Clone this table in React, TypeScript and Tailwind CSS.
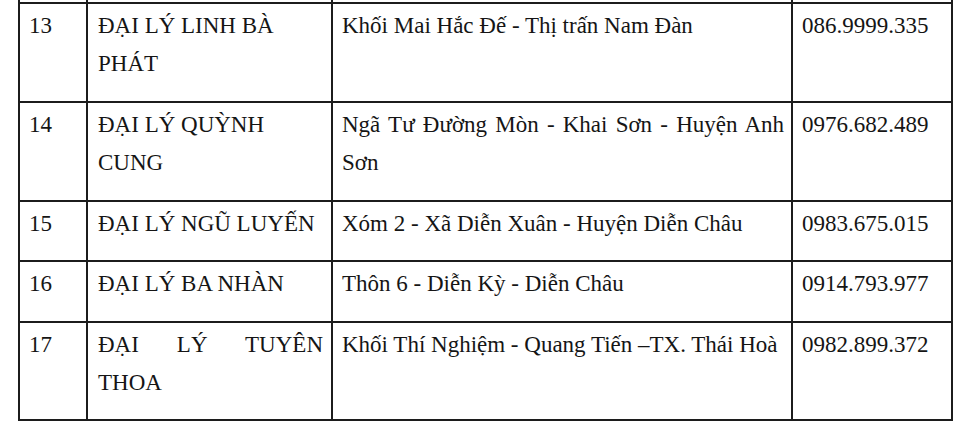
import React from "react";

interface Agent {
    no: string;
    name: string;
    address: string;
    phone: string;
    height: string;
    justifyName?: boolean;
    justifyAddress?: boolean;
}

const agents: Agent[] = [
    {
        no: "13",
        name: "ĐẠI LÝ LINH BÀ PHÁT",
        address: "Khối Mai Hắc Đế - Thị trấn Nam Đàn",
        phone: "086.9999.335",
        height: "h-[99px]",
    },
    {
        no: "14",
        name: "ĐẠI LÝ QUỲNH CUNG",
        address: "Ngã Tư Đường Mòn - Khai Sơn - Huyện Anh Sơn",
        phone: "0976.682.489",
        height: "h-[99px]",
        justifyAddress: true,
    },
    {
        no: "15",
        name: "ĐẠI LÝ NGŨ LUYẾN",
        address: "Xóm 2 - Xã Diễn Xuân - Huyện Diễn Châu",
        phone: "0983.675.015",
        height: "h-[60px]",
    },
    {
        no: "16",
        name: "ĐẠI LÝ BA NHÀN",
        address: "Thôn 6 - Diễn Kỳ - Diễn Châu",
        phone: "0914.793.977",
        height: "h-[61px]",
    },
    {
        no: "17",
        name: "ĐẠI LÝ TUYÊN THOA",
        address: "Khối Thí Nghiệm - Quang Tiến –TX. Thái Hoà",
        phone: "0982.899.372",
        height: "h-[98px]",
        justifyName: true,
    },
];

const cell = "border-2 border-[#1c1c1c] align-top pt-[3px] pb-0";

export default function App() {
    return (
        <div
            className="w-[960px] h-[425px] overflow-hidden bg-white text-[#151515]"
            style={{ fontFamily: '"Liberation Serif", "Times New Roman", serif' }}
        >
            <table className="ml-[18px] w-[935px] table-fixed border-collapse text-[23px] leading-[38px]">
                <colgroup>
                    <col className="w-[68px]" />
                    <col className="w-[245px]" />
                    <col className="w-[460px]" />
                    <col className="w-[160px]" />
                </colgroup>
                <tbody>
                    {/* tail of the row above, cut off by the crop */}
                    <tr className="h-[3px]">
                        <td className="border-2 border-t-0 border-[#1c1c1c] p-0"></td>
                        <td className="border-2 border-t-0 border-[#1c1c1c] p-0"></td>
                        <td className="border-2 border-t-0 border-[#1c1c1c] p-0"></td>
                        <td className="border-2 border-t-0 border-[#1c1c1c] p-0"></td>
                    </tr>
                    {agents.map((a) => (
                        <tr key={a.no} className={a.height}>
                            <td className={cell + " pl-[9px]"}>{a.no}</td>
                            <td
                                className={
                                    cell +
                                    " pl-[10px] pr-[8px] " +
                                    (a.justifyName ? "text-justify" : "text-left")
                                }
                            >
                                {a.name}
                            </td>
                            <td
                                className={
                                    cell +
                                    " pl-[9px] pr-[7px] " +
                                    (a.justifyAddress ? "text-justify" : "text-left")
                                }
                            >
                                {a.address}
                            </td>
                            <td className={cell + " pl-[9px]"}>{a.phone}</td>
                        </tr>
                    ))}
                </tbody>
            </table>
        </div>
    );
}
